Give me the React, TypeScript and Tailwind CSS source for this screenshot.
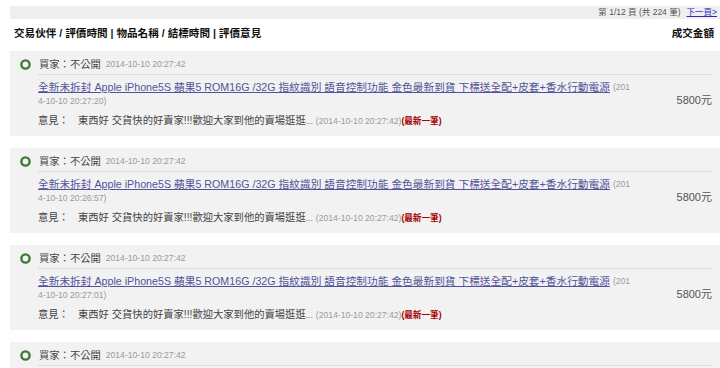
import React from "react";

const Ring = () => (
  <svg width="11" height="11" viewBox="0 0 11 11" className="block">
    <circle cx="5.5" cy="5.5" r="4.1" fill="none" stroke="#3d7a35" strokeWidth="2.4" />
  </svg>
);

type Row = { end: string };

const rows: Row[] = [
  { end: "4-10-10 20:27:20)" },
  { end: "4-10-10 20:26:57)" },
  { end: "4-10-10 20:27:01)" },
];

const Card = ({ end, last }: { end?: string; last?: boolean }) => (
  <div className="flex bg-[#f2f2f2] pt-[4px] pb-[8px]">
    <div className="w-[28px] shrink-0 flex justify-center pl-[2px] pt-[4px]">
      <Ring />
    </div>
    <div className="flex-1 mr-[7px]">
      <div className="h-[20px] flex items-center border-b border-[#dedede] pl-[1px]">
        <span className="text-[10.3px] text-[#444]">買家：不公開</span>
        <span className="ml-[5px] text-[8.6px] text-[#9a9a9a]">2014-10-10 20:27:42</span>
      </div>
      {!last && (
        <div className="flex pt-[5px] h-[53px]">
          <div className="flex-1">
            <div className="h-[14px] flex items-center whitespace-nowrap">
              <a className="text-[10.7px] text-[#52529a] underline decoration-[#52529a]">
                全新未拆封 Apple iPhone5S 蘋果5 ROM16G /32G 指紋識別 語音控制功能 金色最新到貨 下標送全配+皮套+香水行動電源
              </a>
              <span className="ml-[3px] text-[8.6px] text-[#9a9a9a]">(201</span>
            </div>
            <div className="h-[14px] flex items-center text-[8.6px] text-[#9a9a9a]">{end}</div>
            <div className="mt-[6px] h-[14px] flex items-center whitespace-nowrap">
              <span className="text-[10.3px] text-[#444] w-[40px]">意見：</span>
              <span className="text-[10.3px] text-[#444]">東西好 交貨快的好賣家!!!歡迎大家到他的賣場逛逛</span>
              <span className="text-[8.6px] text-[#777]">...</span>
              <span className="ml-[3px] text-[8.6px] text-[#9a9a9a]">(2014-10-10 20:27:42)</span>
              <span className="text-[8.6px] font-bold text-[#a30000]">(最新一筆)</span>
            </div>
          </div>
          <div className="mt-[13px] h-[14px] flex items-center text-[11px] text-[#555] pr-[1px]">5800元</div>
        </div>
      )}
    </div>
  </div>
);

export default function App() {
  return (
    <div className="w-[720px] h-[368px] overflow-hidden bg-white font-['Liberation_Sans','Noto_Sans_CJK_TC',sans-serif]">
      <div className="pl-[10px]">
        <div className="mt-[6px] h-[13px] bg-[#efefef] flex items-center justify-end pr-[3px] text-[8.5px]">
          <span className="text-[#555]">第 1/12 頁 (共 224 筆)</span>
          <a className="ml-[6px] text-[#2b2bc0] underline">下一頁&gt;</a>
        </div>
        <div className="mt-[8px] h-[14px] flex items-center justify-between pl-[4px] pr-[6px] text-[10.6px] font-bold text-[#111]">
          <span>交易伙伴 / 評價時間 | 物品名稱 / 結標時間 | 評價意見</span>
          <span>成交金額</span>
        </div>
        <div className="mt-[10px] flex flex-col gap-[12px]">
          {rows.map((r, i) => (
            <Card key={i} end={r.end} />
          ))}
          <Card last />
        </div>
      </div>
    </div>
  );
}
